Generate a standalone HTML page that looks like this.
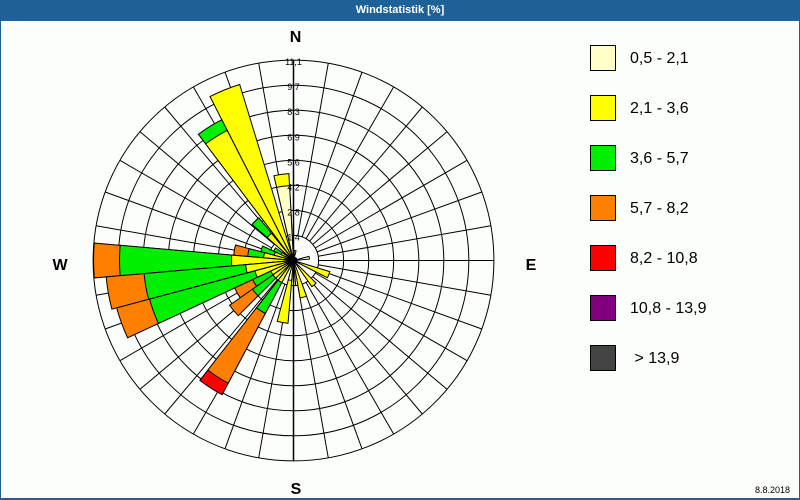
<!DOCTYPE html>
<html><head><meta charset="utf-8"><style>
html,body{margin:0;padding:0;width:800px;height:500px;overflow:hidden;background:#fcfefc;font-family:"Liberation Sans",sans-serif}
#frame{position:absolute;left:0;top:0;width:798px;height:498px;border:1px solid #1e6197;border-top:none;border-bottom:2px solid #1e6197}
#hdr{position:absolute;left:0;top:0;width:800px;height:21px;background:#1e6197;color:#fff;font-size:11px;font-weight:bold;text-align:center;line-height:21px}
svg{position:absolute;left:0;top:0}
.lg{position:absolute;left:590px;width:24px;height:24px;border:1px solid #000}
.lt{position:absolute;left:630px;font-size:16px;color:#000}
</style></head><body>
<div id="frame"></div>
<div id="hdr">Windstatistik [%]</div>
<svg id="s" width="800" height="500" xmlns="http://www.w3.org/2000/svg"></svg>
<div class="lg" style="top:45px;background:#ffffc8"></div><div class="lt" style="top:50px">0,5 - 2,1</div>
<div class="lg" style="top:95px;background:#ffff00"></div><div class="lt" style="top:100px">2,1 - 3,6</div>
<div class="lg" style="top:145px;background:#00f000"></div><div class="lt" style="top:150px">3,6 - 5,7</div>
<div class="lg" style="top:195px;background:#ff8000"></div><div class="lt" style="top:200px">5,7 - 8,2</div>
<div class="lg" style="top:245px;background:#ff0000"></div><div class="lt" style="top:250px">8,2 - 10,8</div>
<div class="lg" style="top:295px;background:#800080"></div><div class="lt" style="top:300px">10,8 - 13,9</div>
<div class="lg" style="top:345px;background:#444"></div><div class="lt" style="top:350px">&nbsp;&gt; 13,9</div>
<script>
var cx=293.5,cy=260.5,sp=25.05,s=document.getElementById('s'),h='';
function pt(r,a){a=(a-90)*Math.PI/180;return [(cx+r*Math.cos(a)).toFixed(1),(cy+r*Math.sin(a)).toFixed(1)];}
for(var k=1;k<=8;k++)h+='<circle cx="'+cx+'" cy="'+cy+'" r="'+(k*sp).toFixed(1)+'" fill="none" stroke="#000" stroke-width="1"/>';
for(var a=0;a<360;a+=10){var p=pt(sp,a),q=pt(8*sp,a);h+='<line x1="'+p[0]+'" y1="'+p[1]+'" x2="'+q[0]+'" y2="'+q[1]+'" stroke="#000" stroke-width="1"/>';}
var C={l:'#ffffc8',y:'#ffff00',g:'#00f000',o:'#ff8000',r:'#ff0000'};
function w(d,r,c){var a=pt(r,d-5),b=pt(r,d+5);return '<path d="M'+cx+' '+cy+'L'+a[0]+' '+a[1]+'A'+r+' '+r+' 0 0 1 '+b[0]+' '+b[1]+'Z" fill="'+c+'" stroke="#000" stroke-width="1"/>';}
var bars=[[352,[['y',87],['l',75]]],[338,[['y',184]]],[328,[['g',158],['y',146]]],[316,[['g',55],['y',35]]],[300,[['g',22],['y',14]]],[290,[['g',34],['y',20]]],[280,[['o',60],['g',46],['y',30]]],[270,[['o',200],['g',174],['y',62]]],[260,[['o',188],['g',150],['y',48]]],[250,[['o',183],['g',149],['y',40]]],[240,[['o',65],['g',45],['y',25]]],[230,[['o',78],['g',50],['y',25]]],[213,[['r',152],['o',139],['g',60],['y',25]]],[190,[['y',63],['l',20]]],[180,[['l',25]]],[165,[['y',38]]],[140,[['y',32]]],[112,[['y',38]]],[80,[['l',16]]],[10,[['l',10]]]];
bars.forEach(function(b){b[1].forEach(function(sg){h+=w(b[0],sg[1],C[sg[0]]);});});
h+='<line x1="'+cx+'" y1="'+(cy-8*sp)+'" x2="'+cx+'" y2="'+(cy+8*sp)+'" stroke="#000" stroke-width="1.5"/>';
h+='<circle cx="'+cx+'" cy="'+cy+'" r="4" fill="#000"/>';
var L=['1,4','2,8','4,2','5,6','6,9','8,3','9,7','11,1'];
for(var k=0;k<8;k++)h+='<text x="'+cx+'" y="'+(cy-(k+1)*sp+5)+'" font-size="9" text-anchor="middle" fill="#000" font-family="Liberation Sans">'+L[k]+'</text>';
h+='<text x="'+(cx+2)+'" y="42" font-size="16" font-weight="bold" text-anchor="middle" font-family="Liberation Sans">N</text>';
h+='<text x="60" y="270" font-size="16" font-weight="bold" text-anchor="middle" font-family="Liberation Sans">W</text>';
h+='<text x="531" y="270" font-size="16" font-weight="bold" text-anchor="middle" font-family="Liberation Sans">E</text>';
h+='<text x="296" y="494" font-size="16" font-weight="bold" text-anchor="middle" font-family="Liberation Sans">S</text>';
h+='<text x="790" y="493" font-size="9" text-anchor="end" font-family="Liberation Sans">8.8.2018</text>';
s.innerHTML=h;
</script>
</body></html>
